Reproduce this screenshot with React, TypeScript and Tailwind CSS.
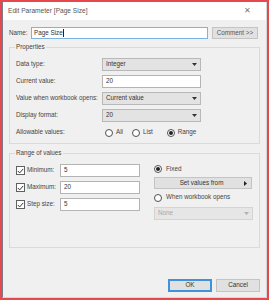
import React from "react";

const font = { fontFamily: '"Liberation Sans", Arial, sans-serif' };

function Caret({ color = "#333" }: { color?: string }) {
  return (
    <svg width="5" height="3" viewBox="0 0 5 3">
      <path d="M0 0 L5 0 L2.5 3 Z" fill={color} />
    </svg>
  );
}

function Select({ value, disabled }: { value: string; disabled?: boolean }) {
  return (
    <div
      className={`flex h-[13px] w-[99px] items-center justify-between border pl-[3px] pr-[3px] ${
        disabled ? "border-[#d4d4d4] bg-[#e6e6e6] text-[#a8a8a8]" : "border-[#b8b8b8] bg-[#e3e3e3] text-[#333]"
      }`}
    >
      <span>{value}</span>
      <Caret color={disabled ? "#b0b0b0" : "#333"} />
    </div>
  );
}

function TextBox({ value, w }: { value: string; w: string }) {
  return (
    <div className={`flex h-[13px] ${w} items-center border border-[#b4b4b4] bg-white pl-[3px] text-[#333]`}>
      {value}
    </div>
  );
}

function Radio({ on }: { on?: boolean }) {
  return (
    <span className="flex h-[8px] w-[8px] items-center justify-center rounded-full border border-[#505050] bg-white">
      {on && <span className="h-[4px] w-[4px] rounded-full bg-[#222]" />}
    </span>
  );
}

function Check() {
  return (
    <span className="flex h-[9px] w-[9px] items-center justify-center border border-[#606060] bg-white">
      <svg width="7" height="6" viewBox="0 0 7 6">
        <path d="M0.8 3 L2.7 4.9 L6.2 0.9" fill="none" stroke="#333" strokeWidth="1" />
      </svg>
    </span>
  );
}

function Row({ label, children }: { label: string; children: React.ReactNode }) {
  return (
    <div className="flex h-[13px] items-center">
      <span className="w-[86px] text-[#444]">{label}</span>
      {children}
    </div>
  );
}

export default function App() {
  return (
    <div className="h-[300px] w-[269px] border-2 border-[#e5484d] text-[6.3px] leading-none" style={font}>
      <div className="flex h-full flex-col border-l border-r border-b border-l-[#7a7a8a] border-r-[#d6d6d6] border-b-[#d6d6d6]">
        {/* Title bar */}
        <div className="flex h-[18px] items-center justify-between bg-white pl-[5px] pr-[15px] text-[#555]">
          <span className="text-[6.6px]">Edit Parameter [Page Size]</span>
          <span className="text-[8px] text-[#777]">✕</span>
        </div>

        <div className="flex flex-1 flex-col bg-[#f0f0f0] px-[6px] pt-[7px]">
          {/* Name */}
          <div className="flex h-[12px] items-center">
            <span className="w-[22px] text-[#444]">Name:</span>
            <div className="flex h-[12px] w-[177px] items-center border border-[#7ab4e4] bg-white pl-[2px] text-[#333]">
              Page Size<span className="ml-[0.5px] h-[8px] w-px bg-[#222]" />
            </div>
            <div className="ml-[4px] flex h-[12px] w-[46px] items-center justify-center border border-[#c4c4c4] bg-[#e1e1e1] text-[#555]">
              Comment &gt;&gt;
            </div>
          </div>

          {/* Properties */}
          <div className="relative mt-[8px] flex h-[97px] flex-col gap-[4px] border border-[#dadada] pl-[6px] pt-[10px]">
            <span className="absolute left-[5px] top-[-4px] bg-[#f0f0f0] px-px text-[#444]">Properties</span>
            <Row label="Data type:">
              <Select value="Integer" />
            </Row>
            <Row label="Current value:">
              <TextBox value="20" w="w-[99px]" />
            </Row>
            <Row label="Value when workbook opens:">
              <Select value="Current value" />
            </Row>
            <Row label="Display format:">
              <Select value="20" />
            </Row>
            <Row label="Allowable values:">
              <div className="flex items-center gap-[3px] pl-[3px] text-[#444]">
                <Radio />
                <span className="mr-[6px]">All</span>
                <Radio />
                <span className="mr-[11px]">List</span>
                <Radio on />
                <span>Range</span>
              </div>
            </Row>
          </div>

          {/* Range of values */}
          <div className="relative mt-[9px] flex h-[95px] border border-[#dadada] pl-[6px] pt-[10px]">
            <span className="absolute left-[5px] top-[-4px] bg-[#f0f0f0] px-px text-[#444]">Range of values</span>
            <div className="flex flex-col gap-[4px]">
              {[
                ["Minimum:", "5"],
                ["Maximum:", "20"],
                ["Step size:", "5"],
              ].map(([l, v]) => (
                <div key={l} className="flex h-[13px] items-center">
                  <Check />
                  <span className="ml-[2px] w-[33px] text-[#444]">{l}</span>
                  <TextBox value={v} w="w-[80px]" />
                </div>
              ))}
            </div>
            <div className="ml-[14px] flex flex-col text-[#444]">
              <div className="flex h-[10px] items-center gap-[4px]">
                <Radio on />
                <span>Fixed</span>
              </div>
              <div className="mt-[3px] flex h-[12px] w-[98px] items-center justify-between border border-[#c4c4c4] bg-[#e1e1e1] pl-[4px] pr-[4px] text-[#333]">
                <span className="flex-1 text-center">Set values from</span>
                <svg width="3" height="5" viewBox="0 0 3 5">
                  <path d="M0 0 L3 2.5 L0 5 Z" fill="#222" />
                </svg>
              </div>
              <div className="mt-[3px] flex h-[11px] items-center gap-[4px]">
                <Radio />
                <span>When workbook opens</span>
              </div>
              <div className="mt-[4px]">
                <Select value="None" disabled />
              </div>
            </div>
          </div>

          {/* Buttons */}
          <div className="mt-auto mb-[5px] flex justify-end gap-[4px]">
            <div className="flex h-[13px] w-[44px] items-center justify-center border-2 border-[#3f93db] bg-[#e1e1e1] text-[#333]">
              OK
            </div>
            <div className="flex h-[13px] w-[44px] items-center justify-center border border-[#c4c4c4] bg-[#e1e1e1] text-[#333]">
              Cancel
            </div>
          </div>
        </div>
      </div>
    </div>
  );
}
